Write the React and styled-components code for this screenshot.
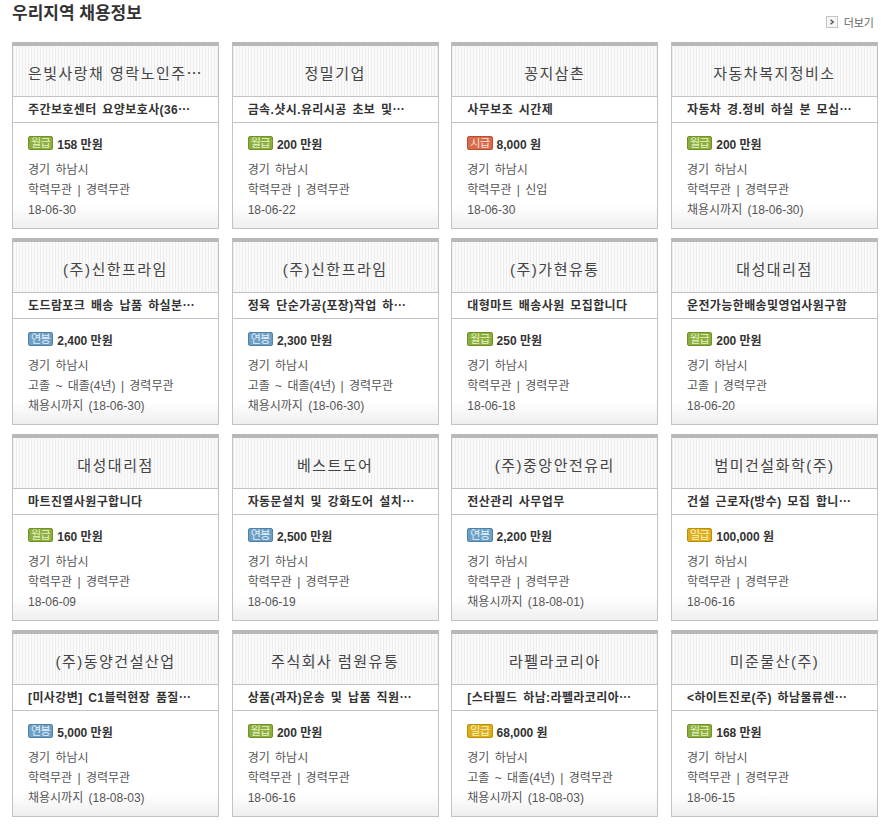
import styled, { createGlobalStyle } from 'styled-components';

const jobs = [
  { company: '은빛사랑채 영락노인주⋯', title: '주간보호센터 요양보호사(36⋯', pay: 'month', amount: '158 만원', edu: '학력무관 | 경력무관', date: '18-06-30' },
  { company: '정밀기업', title: '금속.샷시.유리시공 초보 및⋯', pay: 'month', amount: '200 만원', edu: '학력무관 | 경력무관', date: '18-06-22' },
  { company: '꽁지삼촌', title: '사무보조 시간제', pay: 'hour', amount: '8,000 원', edu: '학력무관 | 신입', date: '18-06-30' },
  { company: '자동차복지정비소', title: '자동차 경.정비 하실 분 모십⋯', pay: 'month', amount: '200 만원', edu: '학력무관 | 경력무관', date: '채용시까지 (18-06-30)' },
  { company: '(주)신한프라임', title: '도드람포크 배송 납품 하실분⋯', pay: 'year', amount: '2,400 만원', edu: '고졸 ~ 대졸(4년) | 경력무관', date: '채용시까지 (18-06-30)' },
  { company: '(주)신한프라임', title: '정육 단순가공(포장)작업 하⋯', pay: 'year', amount: '2,300 만원', edu: '고졸 ~ 대졸(4년) | 경력무관', date: '채용시까지 (18-06-30)' },
  { company: '(주)가현유통', title: '대형마트 배송사원 모집합니다', pay: 'month', amount: '250 만원', edu: '학력무관 | 경력무관', date: '18-06-18' },
  { company: '대성대리점', title: '운전가능한배송및영업사원구함', pay: 'month', amount: '200 만원', edu: '고졸 | 경력무관', date: '18-06-20' },
  { company: '대성대리점', title: '마트진열사원구합니다', pay: 'month', amount: '160 만원', edu: '학력무관 | 경력무관', date: '18-06-09' },
  { company: '베스트도어', title: '자동문설치 및 강화도어 설치⋯', pay: 'year', amount: '2,500 만원', edu: '학력무관 | 경력무관', date: '18-06-19' },
  { company: '(주)중앙안전유리', title: '전산관리 사무업무', pay: 'year', amount: '2,200 만원', edu: '학력무관 | 경력무관', date: '채용시까지 (18-08-01)' },
  { company: '범미건설화학(주)', title: '건설 근로자(방수) 모집 합니⋯', pay: 'day', amount: '100,000 원', edu: '학력무관 | 경력무관', date: '18-06-16' },
  { company: '(주)동양건설산업', title: '[미사강변] C1블럭현장 품질⋯', pay: 'year', amount: '5,000 만원', edu: '학력무관 | 경력무관', date: '채용시까지 (18-08-03)' },
  { company: '주식회사 럼원유통', title: '상품(과자)운송 및 납품 직원⋯', pay: 'month', amount: '200 만원', edu: '학력무관 | 경력무관', date: '18-06-16' },
  { company: '라펠라코리아', title: '[스타필드 하남:라펠라코리아⋯', pay: 'day', amount: '68,000 원', edu: '고졸 ~ 대졸(4년) | 경력무관', date: '채용시까지 (18-08-03)' },
  { company: '미준물산(주)', title: '<하이트진로(주) 하남물류센⋯', pay: 'month', amount: '168 만원', edu: '학력무관 | 경력무관', date: '18-06-15' },
];

const payTypes = {
  month: { label: '월급', bg: '#8cae3e', border: '#6f9127', color: '#e6f4c4' },
  year: { label: '연봉', bg: '#6d9fc5', border: '#4e82aa', color: '#e3f0fa' },
  hour: { label: '시급', bg: '#d86b4c', border: '#b8502f', color: '#fde3da' },
  day: { label: '일급', bg: '#dcae1c', border: '#b78f0b', color: '#fff3c2' },
};

export default function App() {
  return (
    <>
      <GlobalStyle />
      <Page>
        <TopBar>
          <Heading>우리지역 채용정보</Heading>
          <MoreLink href="#">
            <MoreIcon>
              <svg width="6" height="6" viewBox="0 0 6 6">
                <path d="M1.5 0.8 L4.2 3 L1.5 5.2" fill="none" stroke="#555" strokeWidth="1.4" />
              </svg>
            </MoreIcon>
            더보기
          </MoreLink>
        </TopBar>
        <Grid>
          {jobs.map((job, i) => {
            const p = payTypes[job.pay];
            return (
              <Card key={i}>
                <Company>{job.company}</Company>
                <JobTitle>{job.title}</JobTitle>
                <Body>
                  <PayRow>
                    <Badge $bg={p.bg} $border={p.border} $color={p.color}>
                      {p.label}
                    </Badge>
                    <Amount>{job.amount}</Amount>
                  </PayRow>
                  <InfoLine>경기 하남시</InfoLine>
                  <InfoLine>{job.edu}</InfoLine>
                  <InfoLine>{job.date}</InfoLine>
                </Body>
              </Card>
            );
          })}
        </Grid>
      </Page>
    </>
  );
}

//-------------------Styled-components--------------------
const GlobalStyle = createGlobalStyle`
  body {
    margin: 0;
    background: #fff;
    font-family: "Liberation Sans", "Noto Sans CJK KR", sans-serif;
  }
`;

const Page = styled.div`
  width: 866px;
  padding: 0 14px 0 12px;
`;

const TopBar = styled.div`
  display: flex;
  justify-content: space-between;
  align-items: flex-start;
  height: 42px;
`;

const Heading = styled.h2`
  margin: 3px 0 0;
  font-size: 17px;
  line-height: 22px;
  font-weight: bold;
  color: #333;
`;

const MoreLink = styled.a`
  display: flex;
  align-items: center;
  gap: 6px;
  margin: 14px 4px 0 0;
  font-size: 11px;
  color: #666;
  text-decoration: none;
`;

const MoreIcon = styled.span`
  display: flex;
  align-items: center;
  justify-content: center;
  width: 10px;
  height: 10px;
  border: 1px solid #c4c4c4;
  background: #f6f6f6;
`;

const Grid = styled.div`
  display: grid;
  grid-template-columns: repeat(4, 207px);
  justify-content: space-between;
  row-gap: 9px;
`;

const Card = styled.div`
  display: flex;
  flex-direction: column;
  height: 187px;
  box-sizing: border-box;
  border: 1px solid #c3c3c3;
  border-top: 4px solid #b8b8b8;
  background: #fff;
`;

const Company = styled.div`
  height: 44px;
  line-height: 44px;
  padding: 6px 6px 0;
  border-bottom: 1px solid #c3c3c3;
  background: repeating-linear-gradient(
    90deg,
    #eeeeee 0,
    #eeeeee 1px,
    #fafafa 1px,
    #fafafa 3px
  );
  font-size: 15px;
  color: #444;
  letter-spacing: 1.5px;
  text-align: center;
  white-space: nowrap;
  overflow: hidden;
  text-overflow: ellipsis;
`;

const JobTitle = styled.div`
  height: 25px;
  line-height: 26px;
  padding: 0 8px 0 15px;
  border-bottom: 1px solid #c3c3c3;
  font-size: 12px;
  font-weight: bold;
  color: #333;
  letter-spacing: 0.4px;
  word-spacing: 2px;
  white-space: nowrap;
  overflow: hidden;
  text-overflow: ellipsis;
`;

const Body = styled.div`
  flex: 1;
  padding: 10px 10px 0 15px;
  background: linear-gradient(#fff 0%, #fff 78%, #efefef 100%);
`;

const PayRow = styled.div`
  display: flex;
  align-items: center;
  gap: 4px;
  height: 20px;
  margin-bottom: 7px;
`;

const Badge = styled.span`
  display: inline-block;
  height: 12px;
  line-height: 12px;
  padding: 0 2px;
  border: 1px solid ${(p) => p.$border};
  border-radius: 2px;
  background: ${(p) => p.$bg};
  color: ${(p) => p.$color};
  font-size: 11px;
  letter-spacing: -0.5px;
`;

const Amount = styled.span`
  font-size: 12px;
  font-weight: bold;
  color: #333;
`;

const InfoLine = styled.div`
  height: 20px;
  line-height: 21px;
  font-size: 12px;
  color: #555;
  word-spacing: 2px;
  white-space: nowrap;
`;
